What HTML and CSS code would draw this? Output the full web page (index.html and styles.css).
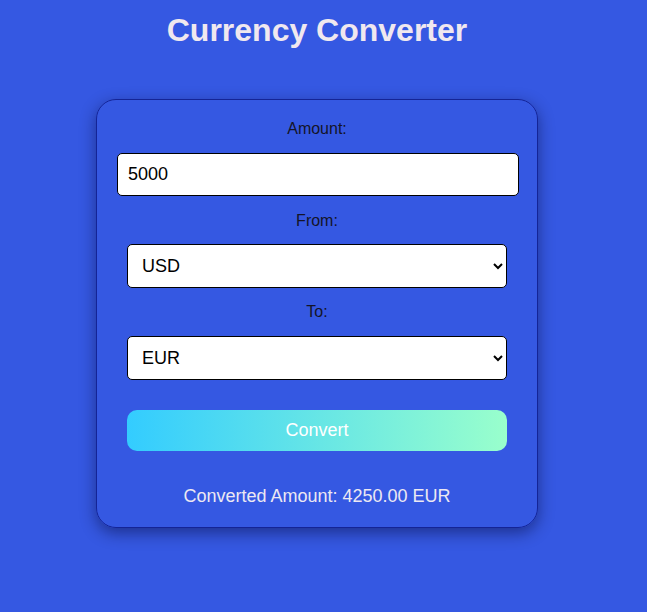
FILE: index.html
```html
<!DOCTYPE html>
<html>
<head>
<meta charset="utf-8">
<link rel="stylesheet" href="styles.css">
</head>
<body>
<div class="page">
  <h1 class="title">Currency Converter</h1>
  <div class="card">
    <label class="label" for="amount">Amount:</label>
    <input class="amount" id="amount" type="text" value="5000">
    <label class="label from-label" for="from">From:</label>
    <select class="select from-select" id="from">
      <option>USD</option>
      <option>EUR</option>
    </select>
    <label class="label to-label" for="to">To:</label>
    <select class="select to-select" id="to">
      <option>EUR</option>
      <option>USD</option>
    </select>
    <button class="convert">Convert</button>
    <p class="result">Converted Amount: 4250.00 EUR</p>
  </div>
</div>
</body>
</html>
```
FILE: styles.css
```css
html, body {
  margin: 0;
  padding: 0;
  background: #3558e2;
  font-family: "Liberation Sans", Arial, sans-serif;
}
.page {
  width: 634px;
  min-height: 612px;
  box-sizing: border-box;
  padding-top: 12px;
  padding-bottom: 40px;
  display: flex;
  flex-direction: column;
  align-items: center;
}
.title {
  margin: 0;
  font-size: 32px;
  line-height: 37px;
  font-weight: bold;
  color: #f0e8ef;
}
.card {
  margin-top: 50px;
  width: 400px;
  padding: 20px;
  border: 1px solid #142496;
  border-radius: 20px;
  box-shadow: 0 5px 16px rgba(0, 0, 40, 0.45);
  display: flex;
  flex-direction: column;
  align-items: center;
}
.label {
  font-size: 16px;
  line-height: 18px;
  color: #141428;
}
.amount {
  box-sizing: border-box;
  align-self: flex-start;
  width: 402px;
  height: 43px;
  margin-top: 15px;
  padding: 0 10px;
  border: 1px solid #000;
  border-radius: 5px;
  background: #fff;
  font-family: "Liberation Sans", Arial, sans-serif;
  font-size: 18px;
  color: #000;
}
.from-label {
  margin-top: 16px;
}
.to-label {
  margin-top: 15px;
}
.select {
  box-sizing: border-box;
  width: 380px;
  height: 44px;
  padding: 0 10px;
  border: 1px solid #000;
  border-radius: 5px;
  background: #fff;
  font-family: "Liberation Sans", Arial, sans-serif;
  font-size: 18px;
  color: #000;
}
.from-select {
  margin-top: 14px;
}
.to-select {
  margin-top: 15px;
}
.convert {
  width: 380px;
  height: 41px;
  margin-top: 30px;
  border: none;
  border-radius: 10px;
  background: linear-gradient(90deg, #33ccff, #99ffcc);
  color: #fff;
  font-family: "Liberation Sans", Arial, sans-serif;
  font-size: 18px;
}
.result {
  margin: 35px 0 0;
  font-size: 18px;
  line-height: 21px;
  color: #ece8f2;
}
```
